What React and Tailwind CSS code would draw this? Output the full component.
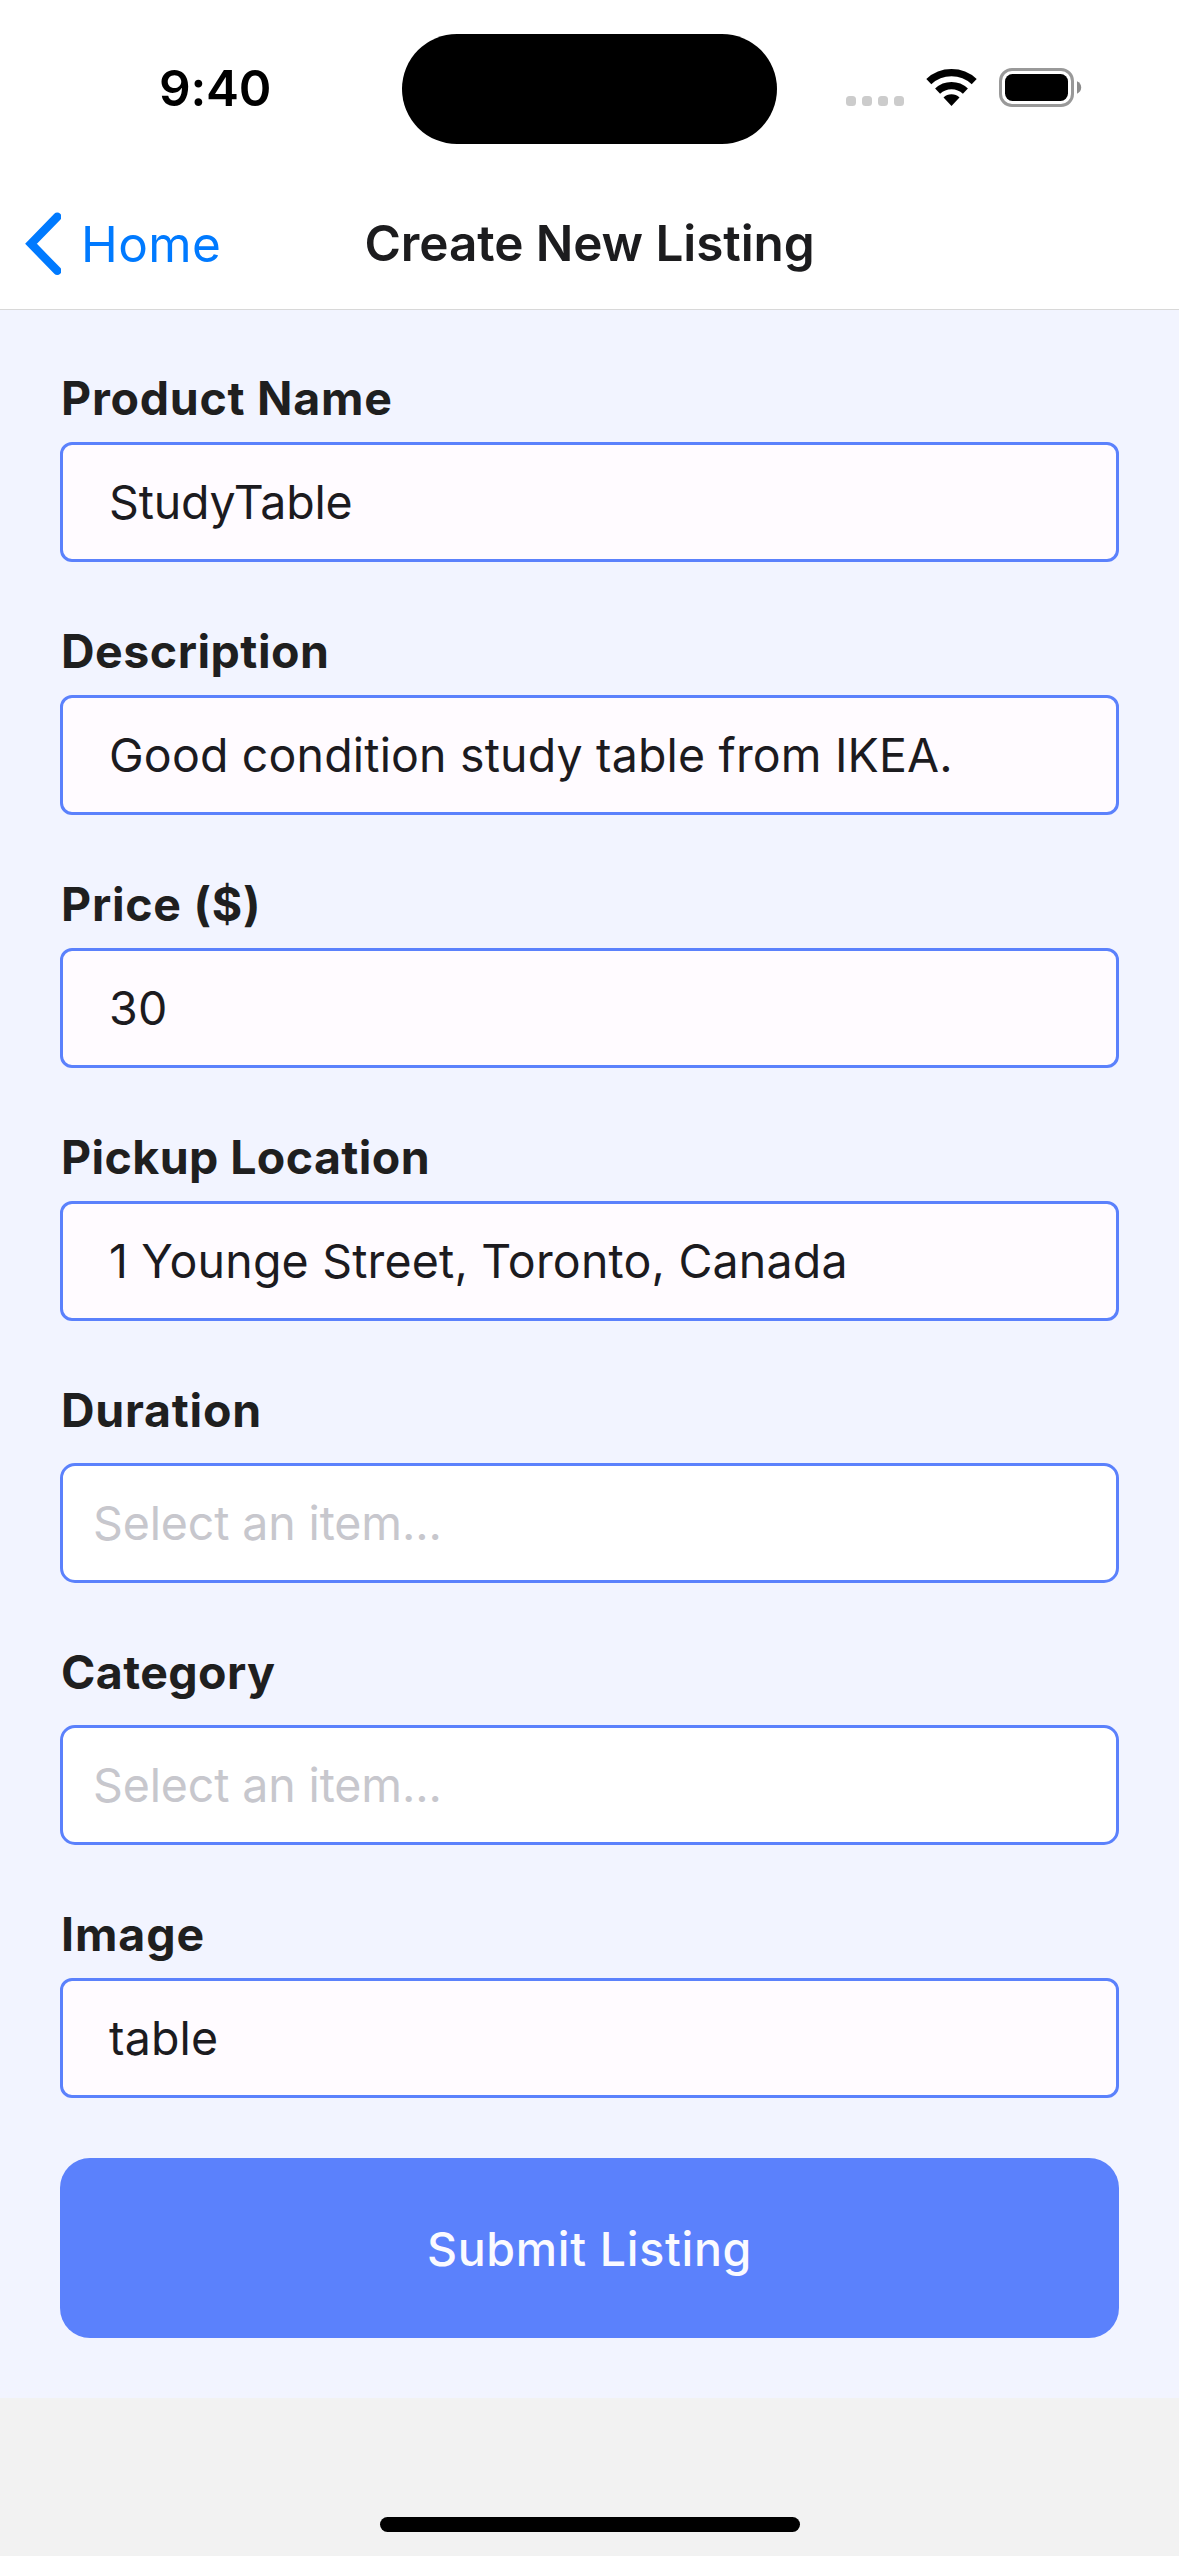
function StatusBar() {
  return (
    <div className="flex h-[177px] bg-white">
      <div className="flex w-[402px] items-center pl-[159px] text-[49.5px] font-semibold leading-none tracking-[-0.2px] text-black">
        9:40
      </div>
      <div className="mt-[34px] h-[110px] w-[375px] rounded-full bg-black" />
      <div className="flex flex-1 pt-[68px] pl-[69px]">
        <div className="mt-[28px] flex gap-[6px]">
          <span className="size-[10px] rounded-[3.5px] bg-[#cccccc]" />
          <span className="size-[10px] rounded-[3.5px] bg-[#cccccc]" />
          <span className="size-[10px] rounded-[3.5px] bg-[#cccccc]" />
          <span className="size-[10px] rounded-[3.5px] bg-[#cccccc]" />
        </div>
        <svg className="mt-px ml-[22px] h-[38px] w-[52px]" viewBox="0 0 52 38" fill="none">
          <path d="M2.8 12.65A33.3 33.3 0 0 1 48.2 12.65" stroke="#000" strokeWidth="7.3" />
          <path d="M11.6 22.1A20.35 20.35 0 0 1 39.4 22.1" stroke="#000" strokeWidth="7.3" />
          <path d="M25.5 37L17.5 28.45A11.7 11.7 0 0 1 33.5 28.45Z" fill="#000" />
        </svg>
        <svg className="ml-[21px] h-[39px] w-[83px]" viewBox="0 0 83 39" fill="none">
          <rect x="1.5" y="1.5" width="72" height="36" rx="11.5" stroke="#999" strokeWidth="3" />
          <rect x="6" y="6" width="63" height="27" rx="7.5" fill="#000" />
          <path d="M78 13.3C80.7 14.5 82.2 16.8 82.2 19.5S80.7 24.5 78 25.7Z" fill="#8c8c8c" />
        </svg>
      </div>
    </div>
  );
}

function NavBar() {
  return (
    <header className="grid h-[133px] grid-cols-[350px_1fr_350px] items-center border-b border-[#d8d8d8] bg-white pt-px leading-none">
      <div className="flex items-center gap-[20px] pl-[25px] text-[#007aff]">
        <svg className="h-[64px] w-[36px]" viewBox="0 0 36 64" fill="none">
          <path
            d="M32.3 4.8L6 31.8L32.3 58.8"
            stroke="currentColor"
            strokeWidth="8.4"
            strokeLinecap="round"
            strokeMiterlimit="10"
          />
        </svg>
        <span className="pt-[2px] text-[49.5px] tracking-[0.4px]">Home</span>
      </div>
      <h1 className="pt-px text-center text-[49.5px] font-semibold tracking-[-0.1px] whitespace-nowrap text-[#1c1c1e]">
        Create New Listing
      </h1>
    </header>
  );
}

function Field({ label, labelClass, children }) {
  return (
    <div className="mb-[60px]">
      <div className={`h-[58px] pl-px text-[46.5px] leading-[58px] font-bold text-[#1f1f1f] ${labelClass}`}>
        {label}
      </div>
      {children}
    </div>
  );
}

function TextBox({ className, children }) {
  return (
    <div
      className={`mt-[15px] flex h-[120px] items-center rounded-[12px] border-3 border-[#5b81fc] bg-[#fffbff] pl-[46px] text-[46.5px] leading-none text-[#1c1b1f] ${className}`}
    >
      {children}
    </div>
  );
}

function SelectBox() {
  return (
    <div className="mt-[24px] flex h-[120px] items-center rounded-[15px] border-3 border-[#5b81fc] bg-white pl-[30px] text-[46.5px] leading-none tracking-[-0.13px] text-[#c7c7cd]">
      Select an item...
    </div>
  );
}

export default function App() {
  return (
    <div className="flex h-[2556px] w-[1179px] flex-col overflow-hidden bg-[#f2f2f2] font-['Inter',sans-serif]">
      <StatusBar />
      <NavBar />
      <main className="h-[2088px] bg-[#f2f4ff] px-[60px] pt-[59px]">
        <Field label="Product Name" labelClass="tracking-[0.75px]">
          <TextBox className="tracking-[-0.2px]">StudyTable</TextBox>
        </Field>
        <Field label="Description" labelClass="tracking-[0.5px]">
          <TextBox className="tracking-[0.16px]">Good condition study table from IKEA.</TextBox>
        </Field>
        <Field label="Price ($)" labelClass="tracking-[0.75px]">
          <TextBox className="tracking-[0.4px]">30</TextBox>
        </Field>
        <Field label="Pickup Location" labelClass="tracking-[0.4px]">
          <TextBox className="tracking-[0.18px]">1 Younge Street, Toronto, Canada</TextBox>
        </Field>
        <Field label="Duration" labelClass="tracking-[0.75px]">
          <SelectBox />
        </Field>
        <Field label="Category" labelClass="tracking-[0.4px]">
          <SelectBox />
        </Field>
        <Field label="Image" labelClass="tracking-[0.9px]">
          <TextBox className="tracking-[0.2px]">table</TextBox>
        </Field>
        <button className="flex h-[180px] w-full items-center justify-center rounded-[30px] bg-[#5b81fc] pt-[2px] text-[46.5px] leading-none font-medium tracking-[0.7px] text-[#fafaff]">
          Submit Listing
        </button>
      </main>
      <footer className="flex flex-1 items-end justify-center pb-[24px]">
        <div className="h-[15px] w-[420px] rounded-full bg-black" />
      </footer>
    </div>
  );
}
